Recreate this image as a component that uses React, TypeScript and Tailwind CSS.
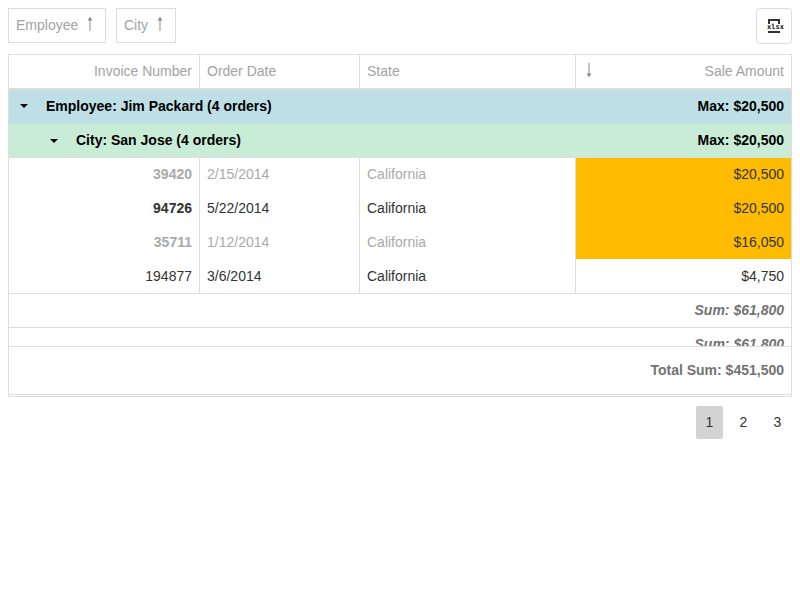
import React from "react";

const Up = () => (
  <svg width="8" height="16" viewBox="0 0 8 16" className="block">
    <path d="M4 1.5V15" stroke="#8a8a8a" strokeWidth="1" fill="none" />
    <path d="M1.5 4.5L4 1L6.5 4.5Z" fill="#8a8a8a" />
  </svg>
);
const Down = () => (
  <svg width="8" height="16" viewBox="0 0 8 16" className="block">
    <path d="M4 1V14.5" stroke="#8a8a8a" strokeWidth="1" fill="none" />
    <path d="M1.5 11.5L4 15L6.5 11.5Z" fill="#8a8a8a" />
  </svg>
);
const Caret = () => (
  <svg width="8" height="4" viewBox="0 0 8 4" className="block">
    <path d="M0 0H8L4 4Z" fill="#000" />
  </svg>
);

const Chip = ({ label, w }: { label: string; w: string }) => (
  <div className={`${w} h-[35px] border border-[#dddddd] flex items-center pl-[7px] gap-[8px] text-[#a3a3a3]`}>
    <span>{label}</span>
    <span className="-mt-[3px]"><Up /></span>
  </div>
);

const rows = [
  { inv: "39420", date: "2/15/2014", state: "California", amt: "$20,500", hi: true, tone: "dim", h: "h-[34px] leading-[33px]" },
  { inv: "94726", date: "5/22/2014", state: "California", amt: "$20,500", hi: true, tone: "bold", h: "h-[34px] leading-[33px]" },
  { inv: "35711", date: "1/12/2014", state: "California", amt: "$16,050", hi: true, tone: "dim", h: "h-[33px] leading-[33px]" },
  { inv: "194877", date: "3/6/2014", state: "California", amt: "$4,750", hi: false, tone: "", h: "h-[34px] leading-[35px]" },
];

export default function App() {
  return (
    <div className="bg-white w-[800px] h-[600px] px-2 pt-2 text-[14px] leading-[17px] text-[#333333] font-['Liberation_Sans',Arial,sans-serif]">
      <div className="flex justify-between h-[36px] mb-[10px]">
        <div className="flex gap-[10px]">
          <Chip label="Employee" w="w-[98px]" />
          <Chip label="City" w="w-[60px]" />
        </div>
        <div className="w-[36px] h-[36px] border border-[#dddddd] rounded-[4px] flex items-center justify-center">
          <div className="w-[12px] h-[14px] border-2 border-[#333333] relative -mt-[1px]">
            <span className="absolute top-[3px] left-[-3px] w-[16px] text-center text-[7px] leading-[7px] font-['DejaVu_Sans_Mono',monospace] font-bold bg-white text-[#111111]">xlsx</span>
          </div>
        </div>
      </div>

      <div className="border-x border-t border-[#dddddd]">
        <div className="grid grid-cols-[191px_160px_216px_215px] h-[35px] border-b-2 border-[#dddddd] text-[#a3a3a3] leading-[33px]">
          <div className="border-r border-[#dddddd] text-right pr-[7px]">Invoice Number</div>
          <div className="border-r border-[#dddddd] pl-[7px]">Order Date</div>
          <div className="border-r border-[#dddddd] pl-[7px]">State</div>
          <div className="flex justify-between pl-[9px] pr-[7px]">
            <span className="mt-[7px]"><Down /></span>
            <span>Sale Amount</span>
          </div>
        </div>

        <div className="h-[34px] bg-[#bedfe6] flex items-center justify-between pr-[7px] pl-[11px] pb-[2px] font-bold text-black">
          <div className="flex items-center gap-[18px]">
            <Caret />
            <span>Employee: Jim Packard (4 orders)</span>
          </div>
          <span>Max: $20,500</span>
        </div>
        <div className="h-[34px] bg-[#c9ecd7] border-b border-[#dddddd] flex items-center justify-between pr-[7px] pl-[41px] font-bold text-black">
          <div className="flex items-center gap-[18px]">
            <Caret />
            <span>City: San Jose (4 orders)</span>
          </div>
          <span>Max: $20,500</span>
        </div>

        {rows.map((r) => (
          <div key={r.inv} className={`grid grid-cols-[191px_160px_216px_215px] ${r.h} ${r.tone === "dim" ? "text-[#aaaaaa]" : ""}`}>
            <div className={`border-r border-[#dddddd] text-right pr-[7px] ${r.tone !== "" ? "font-bold" : ""}`}>{r.inv}</div>
            <div className="border-r border-[#dddddd] pl-[7px]">{r.date}</div>
            <div className="border-r border-[#dddddd] pl-[7px]">{r.state}</div>
            <div className={`text-right pr-[7px] text-[#333333] ${r.hi ? "bg-[#ffbb00]" : ""}`}>{r.amt}</div>
          </div>
        ))}

        <div className="h-[34px] border-t border-[#dddddd] text-right pr-[7px] leading-[33px] italic font-bold text-[#737373]">Sum: $61,800</div>
        <div className="h-[19px] border-t border-[#dddddd] text-right pr-[7px] leading-[33px] italic font-bold text-[#737373] overflow-hidden">Sum: $61,800</div>
        <div className="h-[48px] border-t border-[#dddddd] text-right pr-[7px] leading-[47px] font-bold text-[#737373]">Total Sum: $451,500</div>
        <div className="h-[3px] border-t border-b border-[#dddddd] -mx-px"></div>
      </div>

      <div className="flex justify-end gap-[7px] mt-[9px] pr-px text-[#333333]">
        <div className="w-[27px] h-[33px] rounded-[2px] bg-[#d3d3d3] flex items-center justify-center">1</div>
        <div className="w-[27px] h-[33px] flex items-center justify-center">2</div>
        <div className="w-[27px] h-[33px] flex items-center justify-center">3</div>
      </div>
    </div>
  );
}
